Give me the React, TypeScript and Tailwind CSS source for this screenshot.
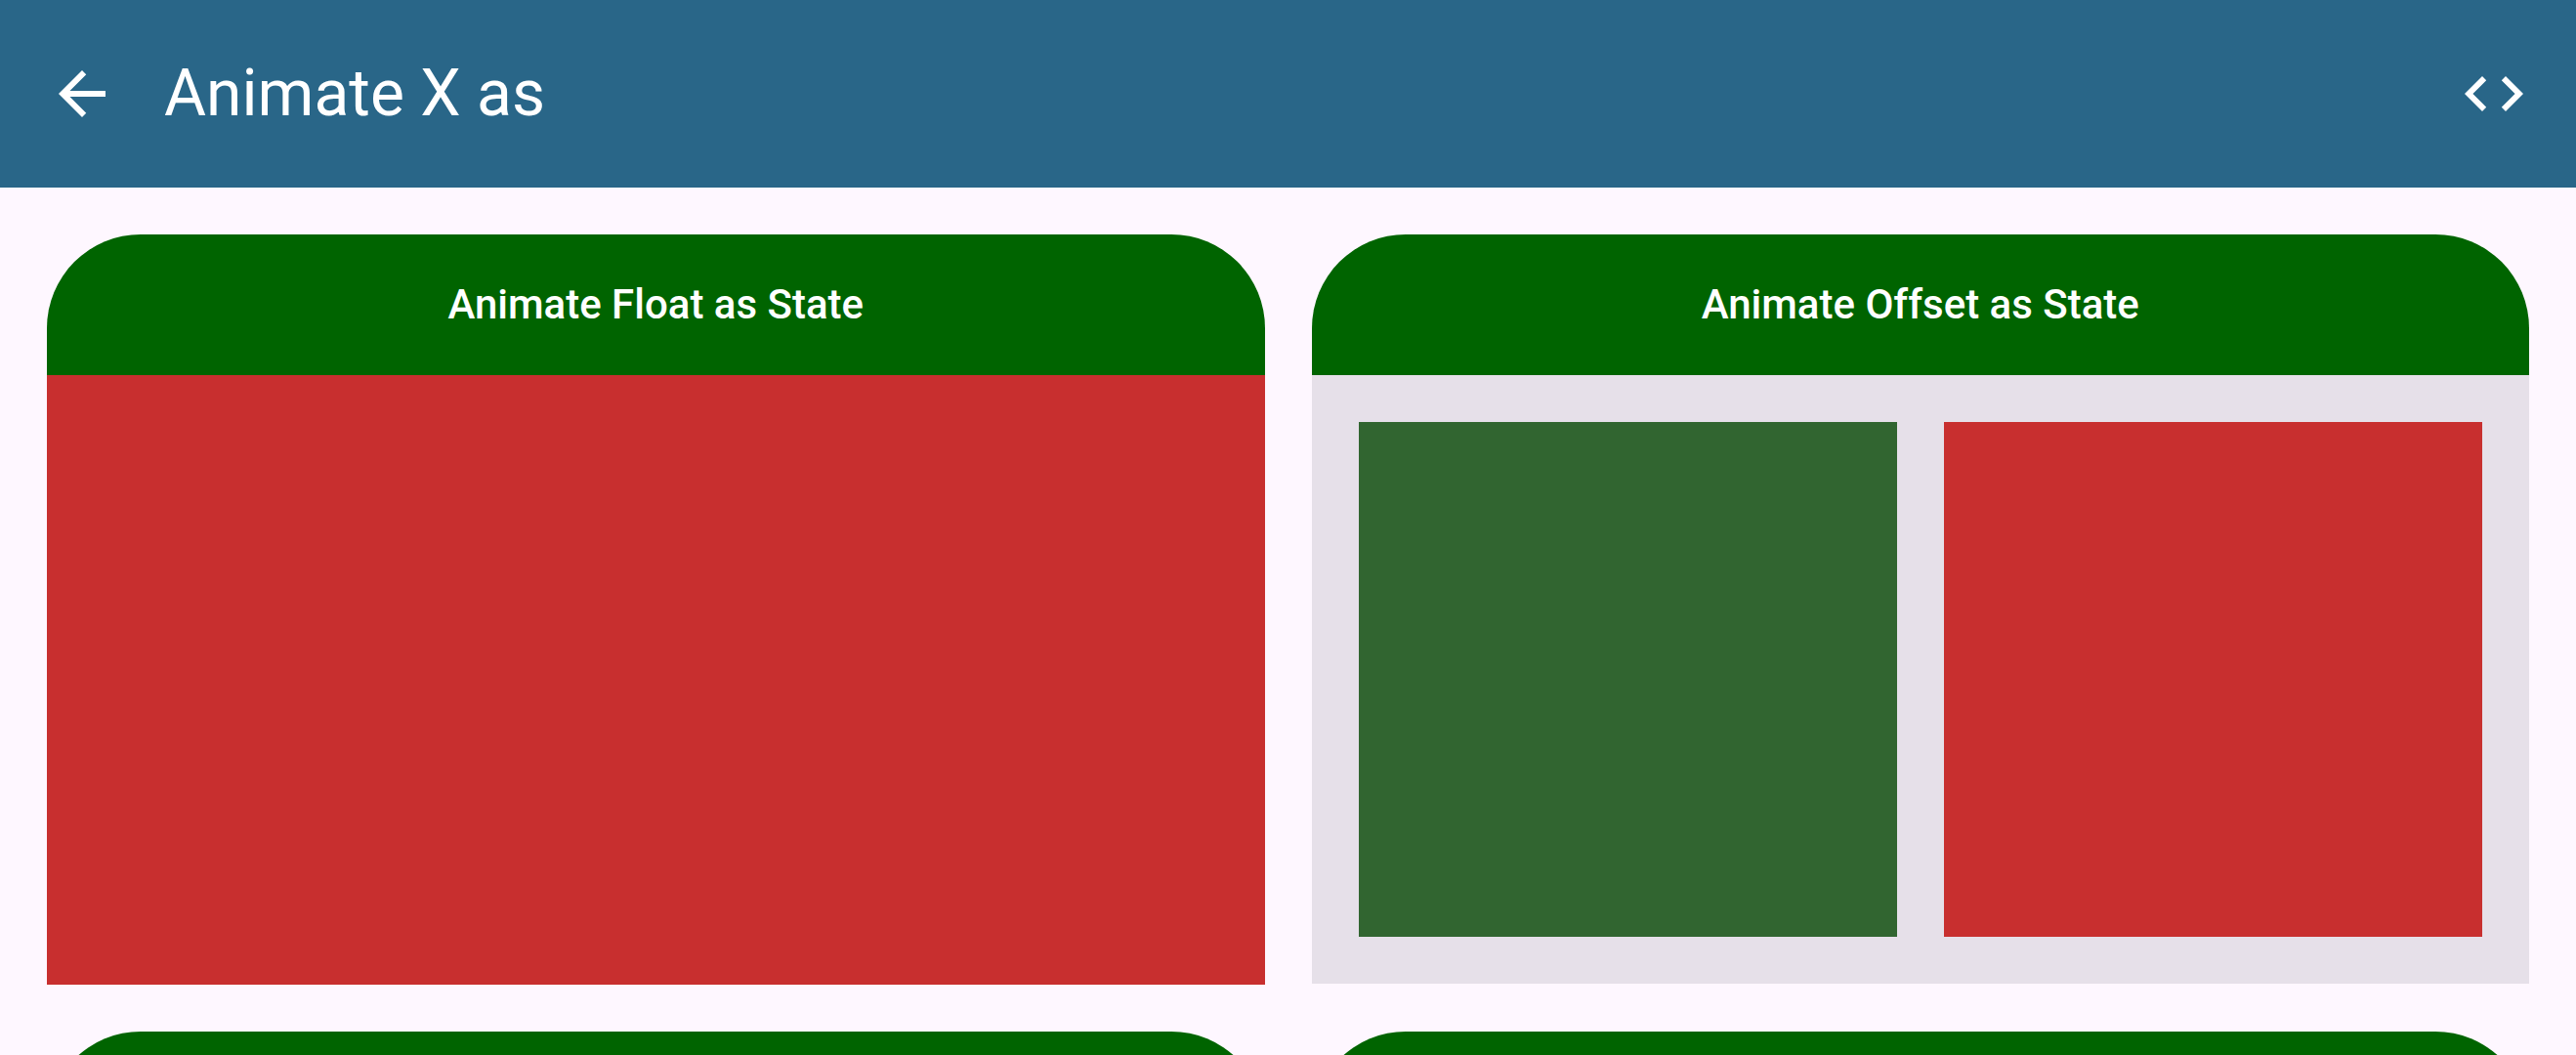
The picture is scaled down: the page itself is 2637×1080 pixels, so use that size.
import type { ReactNode } from 'react';

function ArrowBackIcon() {
  return (
    <svg viewBox="0 0 24 24" className="size-18" fill="currentColor" aria-hidden="true">
      <path d="M20 11H7.83l5.59-5.59L12 4l-8 8 8 8 1.41-1.41L7.83 13H20v-2z" />
    </svg>
  );
}

function CodeIcon() {
  return (
    <svg viewBox="0 0 24 24" className="size-18" fill="currentColor" aria-hidden="true">
      <path d="M9.4 16.6 4.8 12l4.6-4.6L8 6l-6 6 6 6 1.4-1.4zm5.2 0 4.6-4.6-4.6-4.6L16 6l6 6-6 6-1.4-1.4z" />
    </svg>
  );
}

function Card({ title, children }: { title?: string; children?: ReactNode }) {
  return (
    <section>
      <div className="flex h-36 items-center justify-center rounded-t-[96px] bg-[#006400]">
        {title && <h2 className="text-[42px] leading-[60px] font-medium text-white">{title}</h2>}
      </div>
      {children}
    </section>
  );
}

export default function App() {
  return (
    <div className="flex h-screen flex-col overflow-hidden bg-[#fef7ff] font-['Roboto',sans-serif]">
      <header className="flex h-48 shrink-0 items-center gap-12 bg-[#296688] px-12 text-white">
        <button type="button" aria-label="Back">
          <ArrowBackIcon />
        </button>
        <h1 className="flex-1 text-[66px] leading-[84px] font-normal">Animate X as</h1>
        <button type="button" aria-label="View code">
          <CodeIcon />
        </button>
      </header>
      <main className="grid min-h-0 flex-1 grid-cols-2 content-start gap-12 overflow-hidden p-12">
        <Card title="Animate Float as State">
          <div className="min-h-156 bg-[#c82f2f]" />
        </Card>
        <Card title="Animate Offset as State">
          <div className="grid aspect-[2/1] grid-cols-2 gap-12 bg-[#e6e0e9] p-12">
            <div className="bg-[#316530]" />
            <div className="bg-[#c82f2f]" />
          </div>
        </Card>
        <Card />
        <Card />
      </main>
    </div>
  );
}
